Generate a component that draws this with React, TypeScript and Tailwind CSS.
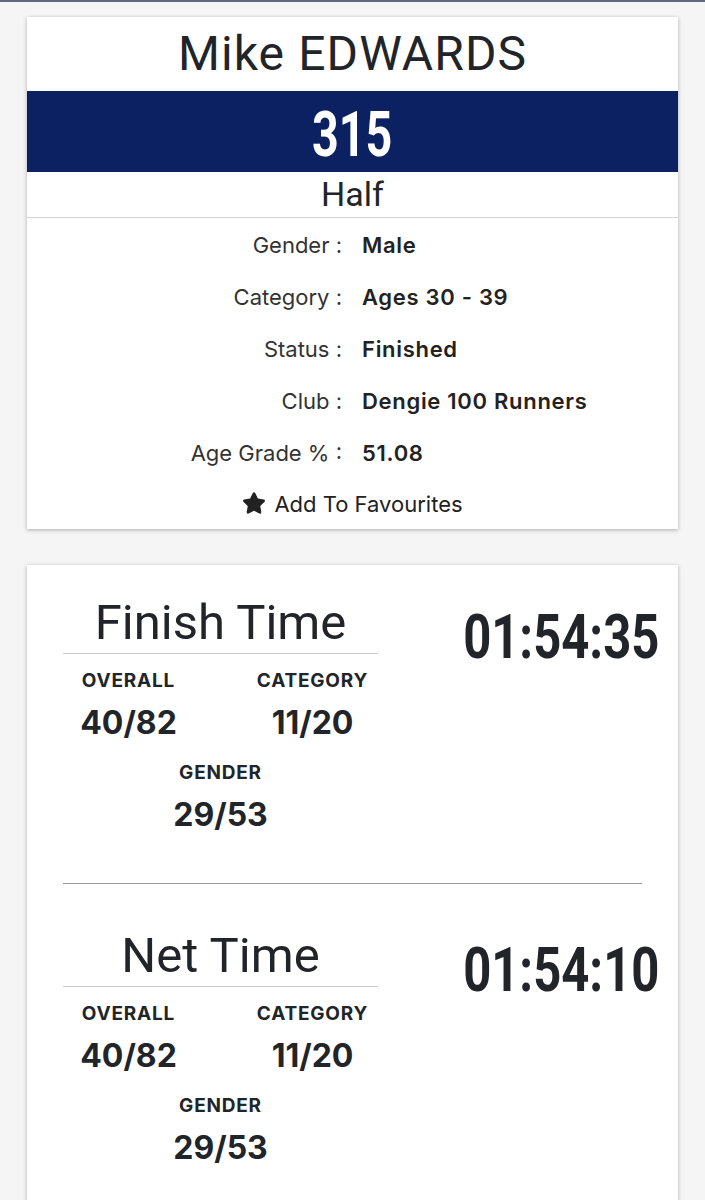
import React from "react";
import { FaStar } from "react-icons/fa6";

const rows: [string, string][] = [
  ["Gender", "Male"],
  ["Category", "Ages 30 - 39"],
  ["Status", "Finished"],
  ["Club", "Dengie 100 Runners"],
  ["Age Grade %", "51.08"],
];

function Stat({ label, value }: { label: string; value: string }) {
  return (
    <div className="w-[120px] flex flex-col items-center">
      <div className="h-[28px] leading-[28px] text-[19px] font-bold tracking-[0.8px] whitespace-nowrap">{label}</div>
      <div className="mt-[8px] h-[40px] leading-[40px] text-[32px] font-bold whitespace-nowrap">{value}</div>
    </div>
  );
}

function TimeSection({ title, time }: { title: string; time: string }) {
  return (
    <div className="flex">
      <div className="w-[315px] shrink-0">
        <div
          className="h-[58px] leading-[58px] text-[49px] text-center border-b border-[#cfcfcf] box-content pb-[1px] whitespace-nowrap"
          style={{ fontFamily: "Roboto, sans-serif" }}
        >
          {title}
        </div>
        <div className="mt-[13px] flex justify-center gap-[64px]">
          <Stat label="OVERALL" value="40/82" />
          <Stat label="CATEGORY" value="11/20" />
        </div>
        <div className="mt-[16px] flex justify-center">
          <Stat label="GENDER" value="29/53" />
        </div>
      </div>
      <div className="flex-1 flex justify-end -mr-[17px] pt-[11px]">
        <div
          className="h-[63px] leading-[63px] text-[62px] font-bold origin-right scale-x-[0.79] whitespace-nowrap"
          style={{ fontFamily: "Roboto, sans-serif" }}
        >
          {time}
        </div>
      </div>
    </div>
  );
}

export default function App() {
  return (
    <div
      className="min-h-[1200px] bg-[#f5f5f5] text-[#212529]"
      style={{ fontFamily: "Inter, 'Noto Sans', sans-serif" }}
    >
      <div className="h-[2px] bg-[#5e6a80]" />
      <div className="px-[27px] pt-[15px] flex flex-col gap-[36px]">
        {/* Card 1 */}
        <div className="bg-white shadow-[0_1px_4px_rgba(0,0,0,0.3)]">
          <div
            className="h-[74px] flex items-center justify-center text-[48px] tracking-[1.1px] whitespace-nowrap"
            style={{ fontFamily: "Roboto, sans-serif" }}
          >
            Mike EDWARDS
          </div>
          <div className="h-[81px] bg-[#0b2162] flex items-center justify-center pt-[6px]">
            <span
              className="inline-block text-white text-[63px] leading-[63px] font-bold scale-x-[0.74]"
              style={{ fontFamily: "Roboto, sans-serif" }}
            >
              315
            </span>
          </div>
          <div
            className="h-[46px] flex items-center justify-center text-[34px] border-b border-[#d4d4d4]"
            style={{ fontFamily: "Roboto, sans-serif" }}
          >
            Half
          </div>
          <div className="pt-[1px]">
            {rows.map(([k, v]) => (
              <div key={k} className="h-[52px] grid grid-cols-[315px_1fr] gap-[20px] items-center">
                <div className="text-right text-[22px] text-[#333] whitespace-nowrap">{k} :</div>
                <div className="text-[22px] font-semibold tracking-[0.7px] text-[#222] whitespace-nowrap">{v}</div>
              </div>
            ))}
            <div className="h-[50px] flex items-center justify-center gap-[8px] text-[22px] text-[#222]">
              <FaStar className="w-[24px] h-[24px] text-[#222] -mt-[2px]" />
              <span>Add To Favourites</span>
            </div>
          </div>
        </div>

        {/* Card 2 */}
        <div className="bg-white shadow-[0_1px_4px_rgba(0,0,0,0.3)] px-[36px] pt-[29px] pb-[40px]">
          <TimeSection title="Finish Time" time="01:54:35" />
          <div className="mt-[48px] border-t border-[#9a9a9a]" />
          <div className="pt-[43px]">
            <TimeSection title="Net Time" time="01:54:10" />
          </div>
        </div>
      </div>
    </div>
  );
}
